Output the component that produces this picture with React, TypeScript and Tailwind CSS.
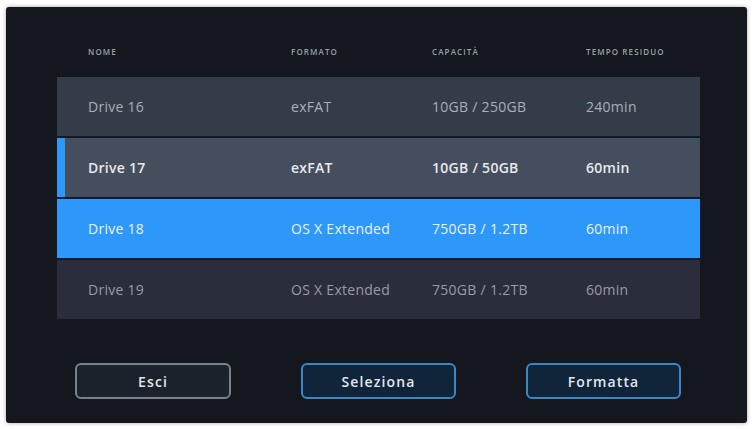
const font = { fontFamily: '"Open Sans", "Liberation Sans", sans-serif' }

const drives = [
  { name: "Drive 16", format: "exFAT", cap: "10GB / 250GB", time: "240min", state: "idle" },
  { name: "Drive 17", format: "exFAT", cap: "10GB / 50GB", time: "60min", state: "active" },
  { name: "Drive 18", format: "OS X Extended", cap: "750GB / 1.2TB", time: "60min", state: "selected" },
  { name: "Drive 19", format: "OS X Extended", cap: "750GB / 1.2TB", time: "60min", state: "dim" },
]

const rowStyles: Record<string, string> = {
  idle: "bg-[#353c49] text-[#a9afb8] font-medium",
  active: "bg-[#454e5d] text-[#e6e9ee] font-semibold",
  selected: "bg-[#2e97fa] text-[#e9f3ff] font-medium",
  dim: "bg-[#2a2e3c] text-[#979ca6] font-medium",
}

export default function App() {
  return (
    <div className="h-[429px] w-[754px] bg-white pl-[6px] pt-[7px]" style={font}>
      <div className="h-[416px] w-[741px] rounded-[3px] bg-[#14171d] shadow-[0_0_4px_rgba(0,0,0,0.35)]">
        <div className="pl-[51px] pt-[39px]">
          <div className="grid h-[12px] w-[643px] grid-cols-[203px_141px_154px_1fr] items-center pl-[31px] text-[8px] font-semibold uppercase tracking-[0.14em] text-[#9aa0a9]">
            <span>Nome</span>
            <span>Formato</span>
            <span>Capacità</span>
            <span>Tempo residuo</span>
          </div>

          <div className="mt-[19px] flex w-[643px] flex-col gap-[2px] bg-[#0d1a2b]">
            {drives.map((d) => (
              <div
                key={d.name}
                className={`relative grid h-[59px] grid-cols-[203px_141px_154px_1fr] items-center pl-[31px] text-[14px] tracking-[0.02em] ${rowStyles[d.state]}`}
              >
                {d.state === "active" && (
                  <span className="absolute left-0 top-0 h-full w-[8px] bg-[#2e97fa]" />
                )}
                <span>{d.name}</span>
                <span>{d.format}</span>
                <span>{d.cap}</span>
                <span>{d.time}</span>
              </div>
            ))}
          </div>
        </div>

        <div className="mt-[44px] flex gap-[70px] pl-[69px]">
          <button className="h-[36px] w-[156px] rounded-[6px] border-2 border-[#7a818b] bg-[#1c222c] text-[14px] font-semibold tracking-[0.08em] text-[#e3e6ea]">
            Esci
          </button>
          <button className="h-[36px] w-[155px] rounded-[6px] border-2 border-[#3b86c6] bg-[#10243a] text-[14px] font-semibold tracking-[0.08em] text-[#e3e6ea]">
            Seleziona
          </button>
          <button className="h-[36px] w-[155px] rounded-[6px] border-2 border-[#3b86c6] bg-[#10243a] text-[14px] font-semibold tracking-[0.08em] text-[#e3e6ea]">
            Formatta
          </button>
        </div>
      </div>
    </div>
  )
}
